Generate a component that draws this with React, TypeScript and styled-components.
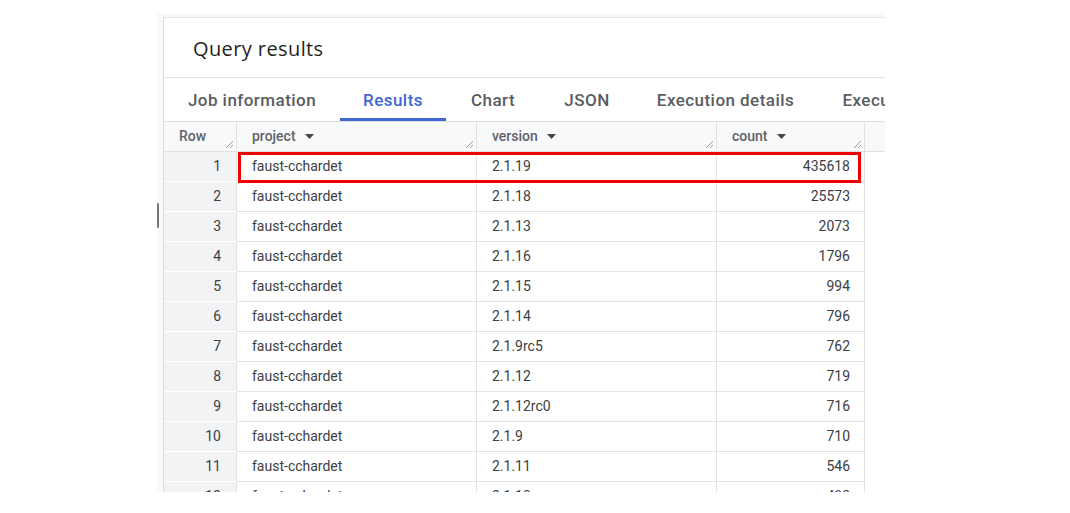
import React from "react";
import styled, { createGlobalStyle } from "styled-components";

const Global = createGlobalStyle`
  html, body { margin: 0; padding: 0; background: #ffffff; }
  body { font-family: Roboto, "Liberation Sans", Arial, sans-serif; }
`;

const Page = styled.div`
  width: 1070px;
  height: 513px;
  padding: 13px 0 0 157px;
  box-sizing: border-box;
  position: relative;
  overflow: hidden;
`;

const Frame = styled.div`
  width: 728px;
  height: 479px;
  background: #f8f9fa;
  padding: 4px 0 0 6px;
  box-sizing: border-box;
  overflow: hidden;
`;

const Panel = styled.div`
  background: #ffffff;
  border-left: 1px solid #dadce0;
  border-top: 1px solid #e3e3e3;
  height: 100%;
  overflow: hidden;
  display: flex;
  flex-direction: column;
`;

const TitleBar = styled.div`
  height: 59px;
  display: flex;
  align-items: center;
  padding-left: 29px;
  border-bottom: 1px solid #e0e0e0;
  flex-shrink: 0;
`;

const Title = styled.h1`
  margin: 0;
  font-family: "Open Sans", Roboto, sans-serif;
  font-size: 20px;
  font-weight: 400;
  letter-spacing: 0.4px;
  color: #1f1f1f;
  padding-top: 1px;
`;

const Tabs = styled.div`
  display: flex;
  height: 43px;
  border-bottom: 1px solid #e0e0e0;
  flex-shrink: 0;
  white-space: nowrap;
`;

const Tab = styled.div<{ $active?: boolean; $w: number }>`
  position: relative;
  width: ${(p) => p.$w}px;
  flex-shrink: 0;
  display: flex;
  align-items: center;
  justify-content: center;
  font-size: 17px;
  font-weight: 500;
  letter-spacing: 0.45px;
  color: ${(p) => (p.$active ? "#3f66d4" : "#5a5d61")};
  &::after {
    content: "";
    display: ${(p) => (p.$active ? "block" : "none")};
    position: absolute;
    left: 0;
    right: 0;
    bottom: 0;
    height: 3px;
    background: #3f66d4;
  }
`;

const cols = "73px 240px 240px 148px 1fr";

const HeaderRow = styled.div`
  display: grid;
  grid-template-columns: ${cols};
  height: 30px;
  background: #f8f9fa;
  border-bottom: 1px solid #e0e0e0;
  flex-shrink: 0;
  box-sizing: border-box;
`;

const HeaderCell = styled.div<{ $last?: boolean }>`
  position: relative;
  display: flex;
  align-items: center;
  padding-left: 15px;
  padding-bottom: 1px;
  font-size: 14px;
  font-weight: 500;
  color: #5f6368;
  border-right: ${(p) => (p.$last ? "none" : "1px solid #e0e0e0")};
  gap: 9px;
`;

const Handle = styled.svg`
  position: absolute;
  right: 2px;
  bottom: 2px;
`;

const Body = styled.div`
  position: relative;
`;

const Row = styled.div`
  display: grid;
  grid-template-columns: 73px 240px 240px 148px;
  height: 30px;
`;

const Cell = styled.div<{ $num?: boolean; $idx?: boolean }>`
  display: flex;
  align-items: center;
  justify-content: ${(p) => (p.$num || p.$idx ? "flex-end" : "flex-start")};
  padding: ${(p) => (p.$idx ? "0 15px 1px 0" : p.$num ? "0 14px 1px 0" : "0 0 1px 15px")};
  font-size: 14px;
  color: #3c4043;
  background: ${(p) => (p.$idx ? "#f1f3f4" : "#ffffff")};
  border-right: 1px solid #e3e3e3;
  border-bottom: 1px solid ${(p) => (p.$idx ? "#ffffff" : "#e3e3e3")};
  box-sizing: border-box;
`;

const Highlight = styled.div`
  position: absolute;
  left: 74px;
  top: 0;
  width: 623px;
  height: 31px;
  border: 3px solid #ee0000;
  box-sizing: border-box;
  pointer-events: none;
`;

const ScrollThumb = styled.div`
  position: absolute;
  left: 157px;
  top: 203px;
  width: 2px;
  height: 25px;
  background: #777;
  border-radius: 1px;
`;

const Caret = () => (
  <svg width="9" height="5" viewBox="0 0 9 5">
    <path d="M0 0h9L4.5 5z" fill="#444746" />
  </svg>
);

const ResizeHandle = () => (
  <Handle width="9" height="9" viewBox="0 0 9 9">
    <path d="M1 8L8 1M5 8L8 5" stroke="#9aa0a6" strokeWidth="1" fill="none" />
  </Handle>
);

const rows: [string, string, string][] = [
  ["faust-cchardet", "2.1.19", "435618"],
  ["faust-cchardet", "2.1.18", "25573"],
  ["faust-cchardet", "2.1.13", "2073"],
  ["faust-cchardet", "2.1.16", "1796"],
  ["faust-cchardet", "2.1.15", "994"],
  ["faust-cchardet", "2.1.14", "796"],
  ["faust-cchardet", "2.1.9rc5", "762"],
  ["faust-cchardet", "2.1.12", "719"],
  ["faust-cchardet", "2.1.12rc0", "716"],
  ["faust-cchardet", "2.1.9", "710"],
  ["faust-cchardet", "2.1.11", "546"],
  ["faust-cchardet", "2.1.10", "483"],
];

const tabs: [string, number][] = [
  ["Job information", 176],
  ["Results", 106],
  ["Chart", 94],
  ["JSON", 94],
  ["Execution details", 183],
  ["Execution graph", 180],
];

export default function App() {
  return (
    <Page>
      <Global />
      <Frame>
        <Panel>
          <TitleBar>
            <Title>Query results</Title>
          </TitleBar>
          <Tabs>
            {tabs.map(([t, w]) => (
              <Tab key={t} $w={w} $active={t === "Results"}>
                {t}
              </Tab>
            ))}
          </Tabs>
          <HeaderRow>
            <HeaderCell>
              Row
              <ResizeHandle />
            </HeaderCell>
            <HeaderCell>
              project <Caret />
              <ResizeHandle />
            </HeaderCell>
            <HeaderCell>
              version <Caret />
              <ResizeHandle />
            </HeaderCell>
            <HeaderCell>
              count <Caret />
              <ResizeHandle />
            </HeaderCell>
            <HeaderCell $last />
          </HeaderRow>
          <Body>
            {rows.map(([p, v, c], i) => (
              <Row key={i}>
                <Cell $idx>{i + 1}</Cell>
                <Cell>{p}</Cell>
                <Cell>{v}</Cell>
                <Cell $num>{c}</Cell>
              </Row>
            ))}
            <Highlight />
          </Body>
        </Panel>
      </Frame>
      <ScrollThumb />
    </Page>
  );
}
